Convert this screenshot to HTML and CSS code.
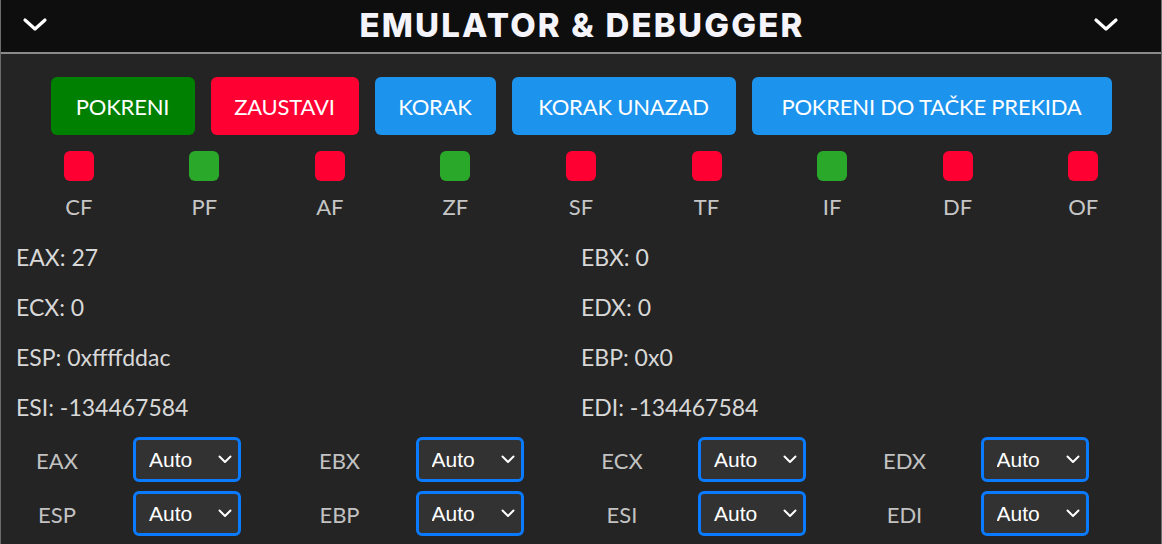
FILE: index.html
```html
<!DOCTYPE html>
<html lang="sr">
<head>
<meta charset="utf-8">
<title>Emulator &amp; Debugger</title>
<link rel="stylesheet" href="styles.css">
</head>
<body>
<div class="panel">
  <header class="header">
    <svg class="chev" width="26" height="16" viewBox="0 0 26 16"><path d="M3 3 L13 12 L23 3" fill="none" stroke="#fff" stroke-width="3.2" stroke-linecap="round" stroke-linejoin="round"/></svg>
    <h1 class="title">EMULATOR &amp; DEBUGGER</h1>
    <svg class="chev chev-right" width="26" height="16" viewBox="0 0 26 16"><path d="M3 3 L13 12 L23 3" fill="none" stroke="#fff" stroke-width="3.2" stroke-linecap="round" stroke-linejoin="round"/></svg>
  </header>
  <main class="content">
    <div class="toolbar">
      <button class="btn btn-green btn-run">POKRENI</button>
      <button class="btn btn-red btn-stop">ZAUSTAVI</button>
      <button class="btn btn-blue btn-step">KORAK</button>
      <button class="btn btn-blue btn-back">KORAK UNAZAD</button>
      <button class="btn btn-blue btn-break">POKRENI DO TAČKE PREKIDA</button>
    </div>
    <div class="flags">
      <div class="flag"><span class="dot off"></span><span class="flag-name">CF</span></div>
      <div class="flag"><span class="dot on"></span><span class="flag-name">PF</span></div>
      <div class="flag"><span class="dot off"></span><span class="flag-name">AF</span></div>
      <div class="flag"><span class="dot on"></span><span class="flag-name">ZF</span></div>
      <div class="flag"><span class="dot off"></span><span class="flag-name">SF</span></div>
      <div class="flag"><span class="dot off"></span><span class="flag-name">TF</span></div>
      <div class="flag"><span class="dot on"></span><span class="flag-name">IF</span></div>
      <div class="flag"><span class="dot off"></span><span class="flag-name">DF</span></div>
      <div class="flag"><span class="dot off"></span><span class="flag-name">OF</span></div>
    </div>
    <div class="regs">
      <div class="reg">EAX: 27</div>
      <div class="reg">EBX: 0</div>
      <div class="reg">ECX: 0</div>
      <div class="reg">EDX: 0</div>
      <div class="reg">ESP: 0xffffddac</div>
      <div class="reg">EBP: 0x0</div>
      <div class="reg">ESI: -134467584</div>
      <div class="reg">EDI: -134467584</div>
    </div>
    <div class="modes">
      <div class="mode"><span class="mode-name">EAX</span><div class="sel"><select><option>Auto</option></select><svg class="sel-chev" width="14" height="9" viewBox="0 0 14 9"><path d="M1.5 1.5 L7 7 L12.5 1.5" fill="none" stroke="#fff" stroke-width="2" stroke-linecap="round" stroke-linejoin="round"/></svg></div></div>
      <div class="mode"><span class="mode-name">EBX</span><div class="sel"><select><option>Auto</option></select><svg class="sel-chev" width="14" height="9" viewBox="0 0 14 9"><path d="M1.5 1.5 L7 7 L12.5 1.5" fill="none" stroke="#fff" stroke-width="2" stroke-linecap="round" stroke-linejoin="round"/></svg></div></div>
      <div class="mode"><span class="mode-name">ECX</span><div class="sel"><select><option>Auto</option></select><svg class="sel-chev" width="14" height="9" viewBox="0 0 14 9"><path d="M1.5 1.5 L7 7 L12.5 1.5" fill="none" stroke="#fff" stroke-width="2" stroke-linecap="round" stroke-linejoin="round"/></svg></div></div>
      <div class="mode"><span class="mode-name">EDX</span><div class="sel"><select><option>Auto</option></select><svg class="sel-chev" width="14" height="9" viewBox="0 0 14 9"><path d="M1.5 1.5 L7 7 L12.5 1.5" fill="none" stroke="#fff" stroke-width="2" stroke-linecap="round" stroke-linejoin="round"/></svg></div></div>
      <div class="mode"><span class="mode-name">ESP</span><div class="sel"><select><option>Auto</option></select><svg class="sel-chev" width="14" height="9" viewBox="0 0 14 9"><path d="M1.5 1.5 L7 7 L12.5 1.5" fill="none" stroke="#fff" stroke-width="2" stroke-linecap="round" stroke-linejoin="round"/></svg></div></div>
      <div class="mode"><span class="mode-name">EBP</span><div class="sel"><select><option>Auto</option></select><svg class="sel-chev" width="14" height="9" viewBox="0 0 14 9"><path d="M1.5 1.5 L7 7 L12.5 1.5" fill="none" stroke="#fff" stroke-width="2" stroke-linecap="round" stroke-linejoin="round"/></svg></div></div>
      <div class="mode"><span class="mode-name">ESI</span><div class="sel"><select><option>Auto</option></select><svg class="sel-chev" width="14" height="9" viewBox="0 0 14 9"><path d="M1.5 1.5 L7 7 L12.5 1.5" fill="none" stroke="#fff" stroke-width="2" stroke-linecap="round" stroke-linejoin="round"/></svg></div></div>
      <div class="mode"><span class="mode-name">EDI</span><div class="sel"><select><option>Auto</option></select><svg class="sel-chev" width="14" height="9" viewBox="0 0 14 9"><path d="M1.5 1.5 L7 7 L12.5 1.5" fill="none" stroke="#fff" stroke-width="2" stroke-linecap="round" stroke-linejoin="round"/></svg></div></div>
    </div>
  </main>
</div>
</body>
</html>
```

FILE: styles.css
```css
* { box-sizing: border-box; }
html, body { margin: 0; padding: 0; }
body {
  background: #242424;
  font-family: "Lato", "Open Sans", sans-serif;
  color: #d6d6d6;
  overflow: hidden;
}
.panel {
  height: 544px;
  border-left: 1px solid #6c6c6c;
  border-right: 1px solid #6c6c6c;
}
.header {
  height: 54px;
  background: #0e0e0e;
  border-bottom: 2px solid #8a8a8a;
  display: grid;
  grid-template-columns: 1fr auto 1fr;
  align-items: center;
  padding: 0 21px;
}
.title {
  margin: 0;
  color: #f4f4fa;
  font-family: "Inter", "Lato", sans-serif;
  font-weight: 800;
  font-size: 33px;
  letter-spacing: 2.2px;
  line-height: 1;
  margin-top: -2px;
  margin-right: -2px;
}
.chev { display: block; margin-top: -3px; }
.chev-right { justify-self: end; margin-right: 21px; }
.content {
  padding: 23px 15px 0 15px;
}
.toolbar {
  display: flex;
  justify-content: center;
  gap: 16px;
}
.btn {
  height: 58px;
  border: none;
  border-radius: 6px;
  padding: 0;
  color: #fff;
  font-family: "Lato", sans-serif;
  font-size: 22px;
  font-weight: 400;
  letter-spacing: -0.2px;
  text-align: center;
}
.btn-run { width: 144px; }
.btn-stop { width: 148px; }
.btn-step { width: 121px; }
.btn-back { width: 224px; }
.btn-break { width: 360px; }
.btn-green { background: #008000; }
.btn-red { background: #ff0033; }
.btn-blue { background: #1c94ee; }
.flags {
  margin-top: 16px;
  display: grid;
  grid-template-columns: repeat(9, 1fr);
}
.flag {
  display: flex;
  flex-direction: column;
  align-items: center;
}
.dot {
  width: 30px;
  height: 30px;
  border-radius: 6px;
}
.dot.on { background: #2aa82a; }
.dot.off { background: #ff0033; }
.flag-name {
  margin-top: 13px;
  font-size: 22px;
  line-height: 26px;
  color: #c6c6c6;
}
.regs {
  margin-top: 12px;
  display: grid;
  grid-template-columns: 1fr 1fr;
  grid-auto-rows: 50px;
}
.reg {
  display: flex;
  align-items: center;
  font-size: 23px;
  color: #d8d8d8;
}
.modes {
  margin-top: 5px;
  display: grid;
  grid-template-columns: repeat(4, 1fr);
  row-gap: 9px;
}
.mode {
  display: flex;
  align-items: center;
}
.mode-name {
  width: 82px;
  text-align: center;
  font-size: 22px;
  color: #c2c2c2;
  margin-right: 35px;
  padding-top: 2px;
}
.sel {
  position: relative;
  width: 108px;
  height: 45px;
}
.sel select {
  appearance: none;
  -webkit-appearance: none;
  width: 100%;
  height: 100%;
  background: #323232;
  border: 3px solid #0a7bff;
  border-radius: 6px;
  color: #fff;
  font-family: "Liberation Sans", Arial, sans-serif;
  font-size: 21px;
  padding: 0 0 0 13px;
  outline: none;
}
.sel-chev {
  position: absolute;
  right: 9px;
  top: 18px;
  pointer-events: none;
}
```
